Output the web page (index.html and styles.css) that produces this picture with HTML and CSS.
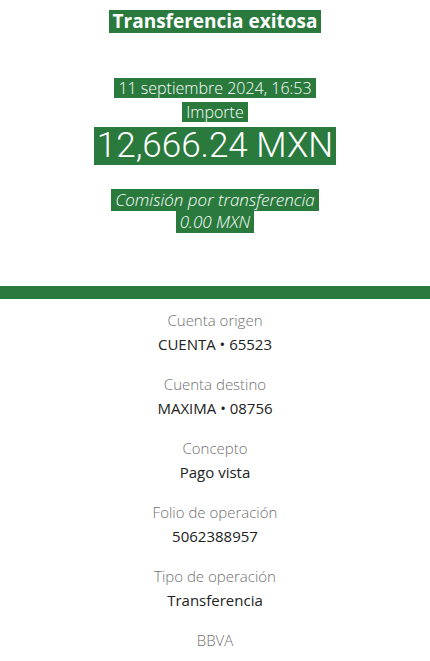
FILE: index.html
```html
<!DOCTYPE html>
<html lang="es">
<head>
<meta charset="utf-8">
<title>Transferencia exitosa</title>
<link rel="stylesheet" href="styles.css">
</head>
<body>
<header class="hero">
  <h1 class="title"><span class="hl">Transferencia exitosa</span></h1>
  <p class="date"><span class="hl">11 septiembre 2024, 16:53</span></p>
  <p class="label-top"><span class="hl">Importe</span></p>
  <p class="amount"><span class="hl">12,666.24 MXN</span></p>
  <p class="fee first"><span class="hl">Comisión por transferencia</span></p>
  <p class="fee"><span class="hl">0.00 MXN</span></p>
</header>
<div class="bar"></div>
<main class="details">
  <div class="item"><div class="lbl">Cuenta origen</div><div class="val">CUENTA • 65523</div></div>
  <div class="item"><div class="lbl">Cuenta destino</div><div class="val">MAXIMA • 08756</div></div>
  <div class="item"><div class="lbl">Concepto</div><div class="val">Pago vista</div></div>
  <div class="item"><div class="lbl">Folio de operación</div><div class="val">5062388957</div></div>
  <div class="item"><div class="lbl">Tipo de operación</div><div class="val">Transferencia</div></div>
  <div class="item"><div class="lbl">BBVA</div></div>
</main>
</body>
</html>
```
FILE: styles.css
```css
html, body {
  margin: 0;
  padding: 0;
  background: #ffffff;
}
body {
  font-family: "Open Sans", Lato, sans-serif;
  text-align: center;
  width: 430px;
  overflow: hidden;
}
p, h1 { margin: 0; }
.hl {
  display: inline-block;
  background: #2a7a3e;
  color: #ffffff;
  padding: 0 4px;
}
.hero {
  padding-top: 10px;
  display: flex;
  flex-direction: column;
  align-items: center;
}
.title {
  font-weight: 700;
  font-size: 19px;
  line-height: 23px;
}
.title .hl { line-height: 23px; }
.date {
  margin-top: 45px;
  font-size: 16px;
  font-weight: 300;
  line-height: 20px;
}
.date .hl { line-height: 20px; }
.label-top {
  margin-top: 4px;
  font-size: 16px;
  font-weight: 300;
  line-height: 20px;
}
.label-top .hl { line-height: 20px; }
.amount {
  margin-top: 5px;
  font-family: Roboto, sans-serif;
  font-size: 35px;
  font-weight: 300;
  line-height: 38px;
}
.amount .hl { line-height: 38px; padding: 0 3px; }
.fee {
  font-size: 17px;
  font-style: italic;
  font-weight: 300;
  line-height: 22px;
}
.fee .hl { line-height: 22px; }
.fee.first { margin-top: 24px; }
.bar {
  margin-top: 53px;
  height: 13px;
  background: #2a7a3e;
}
.details {
  padding-top: 9px;
  display: flex;
  flex-direction: column;
  gap: 16px;
}
.lbl {
  font-size: 15px;
  font-weight: 300;
  color: #707070;
  line-height: 24px;
}
.val {
  font-size: 15px;
  font-weight: 400;
  color: #222222;
  line-height: 24px;
}
```
